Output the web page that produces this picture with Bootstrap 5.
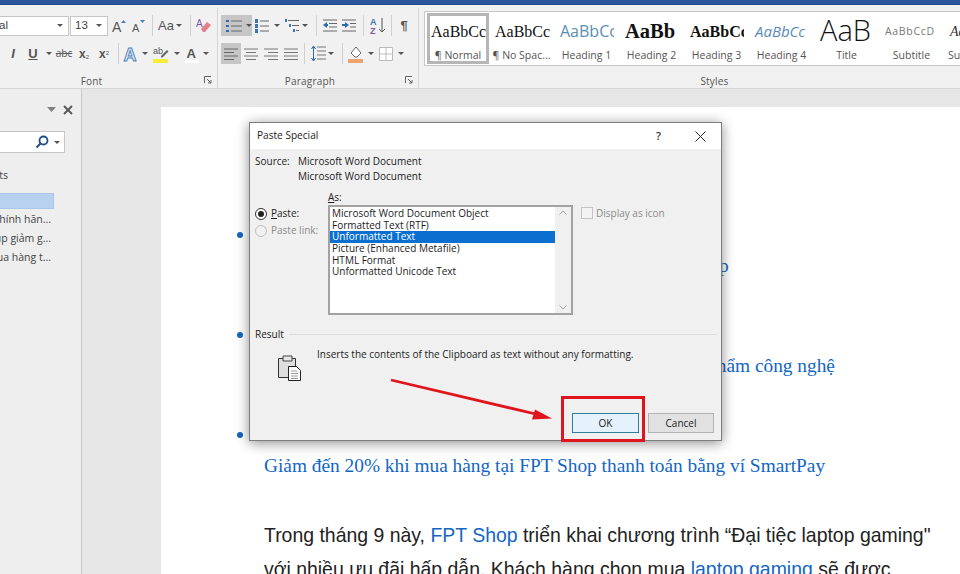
<!DOCTYPE html>
<html lang="vi">
<head>
<meta charset="utf-8">
<title>Paste Special</title>
<link rel="stylesheet" href="https://cdn.jsdelivr.net/npm/bootstrap@5.3.0/dist/css/bootstrap.min.css">
<style>
html,body{margin:0;height:574px;overflow:hidden;background:#e6e6e6}
body{font-family:"Open Sans","Noto Sans",sans-serif;font-size:10px;color:#333}
.wd-root{position:relative;width:960px;height:574px;overflow:hidden}
.wd-top{height:5px;background:#2b579a;border-bottom:1px solid #1f4a8c}
.wd-ribbon{height:84px;background:#f1f1f1;border-bottom:1px solid #d6d6d6}
.rb-font{width:218px;flex:none;border-right:1px solid #d4d4d4;margin:3px 0 0}
.rb-para{width:201px;flex:none;border-right:1px solid #d4d4d4;margin:3px 0 0}
.rb-rows{padding-top:7px;height:63px;gap:7px}
.rb-row{height:21px}
.rb-label{height:16px;padding-top:2px;font-size:10px;color:#555;letter-spacing:.2px;flex:none}
.lb-font{padding-right:34px}
.lb-para{padding-right:16px}
.lb-sty{padding-left:46px}
.rb-launch{right:5px;bottom:4px}
.w1{width:1px}.w2{width:2px}.w3{width:3px}.w4{width:4px}.w6{width:6px}.w8{width:8px}.w10{width:10px}.w12{width:12px}.w18{width:18px}.w19{width:19px}.w20{width:20px}.w22{width:22px}.w31{width:31px}
.cl{height:21px;display:flex;align-items:center;justify-content:center;flex:none;color:#555}
.cl svg{display:block;flex:none}
.sp{position:relative}
.sp::after{content:"";position:absolute;left:50%;top:0;bottom:0;width:1px;background:#d0d0d0}
.cr::after{content:"";display:block;border:3px solid transparent;border-top:3.5px solid #555;border-bottom:0}
.on{background:#c6c6c6}
.fbox{height:20px;background:#fff;border:1px solid #c6c6c6;font-size:11.5px;color:#444;font-family:"Liberation Sans",sans-serif}
.fb-name{width:69px;margin-right:1px;border-left:0}
.fb-name span{margin-left:-15px;white-space:nowrap}
.fb-size{width:38px;margin-right:2px}
.fbox .cr{margin-left:auto;margin-right:5px}
.g-a{font-family:"Liberation Sans",sans-serif;font-size:13px;color:#555;line-height:1}
.g-x{font-size:12px}
.g-x sub,.g-x sup{font-size:6px;font-weight:400}
.gal{margin:6px 0 0 5px;width:540px;height:55px;flex:none;background:#fff;border:1px solid #c8c8c8;border-right:0;padding:1px 0 0 2px;overflow:hidden}
.tile{width:65px;height:51px;flex:none;overflow:hidden;text-align:center;padding-top:3px}
.tile.act{border:3px solid #b6b6b6;width:62px;padding-top:0}
.tv{height:31px;line-height:31px;white-space:nowrap;overflow:hidden;color:#111;display:flex;justify-content:flex-start;align-items:center;padding-left:6px}
.tile.act .tv{padding-left:1px}
.tl{font-size:10.5px;line-height:14px;margin-top:1px;color:#555;white-space:nowrap}
.t-serif{font-family:"Liberation Serif",serif;font-size:16px;width:61px}
.t-h1{font-family:"Open Sans",sans-serif;font-size:16px;color:#5a8db5;width:60px}
.t-h2{font-family:"Liberation Serif",serif;font-weight:700;font-size:20.5px}
.t-h3{font-family:"Liberation Serif",serif;font-weight:700;font-size:16px;width:60px}
.t-h4{font-family:"Open Sans",sans-serif;font-style:italic;font-size:15px;color:#5a8db5}
.t-ti{font-family:"Open Sans",sans-serif;font-weight:300;font-size:29px}
.t-ti span{margin-top:-5px}
.t-su{font-family:"Open Sans",sans-serif;font-size:10.5px;color:#777;letter-spacing:.7px}
.t-em{font-family:"Liberation Serif",serif;font-style:italic;font-size:14px;color:#333}
.tv span{flex:none}
.wd-body{height:485px}
.nv{width:82px;background:#eeeeee;border-right:1px solid #c9c9c9;padding-top:12px;font-size:10.5px;color:#444;overflow:hidden}
.nv-head{height:18px;padding-right:8px;gap:7px}
.nv-search{width:65px;height:22px;margin-top:12px;background:#fff;border:1px solid #c6c6c6;border-left:0;gap:5px;padding-right:4px}
.nv-item{white-space:nowrap;height:19px;line-height:19px;width:51px;overflow:visible}
.nv-res{margin-top:15px;margin-bottom:9px;width:8px}
.nv-hi{width:54px;height:16px;background:#b9d1f1;border:1px solid #a9c5ea;border-left:0;margin-bottom:1px}
.dk{flex:1;padding:18px 0 0 79px;overflow:hidden}
.pg{height:470px;background:#fff;padding:118px 0 0 103px;overflow:hidden}
.pg-b{margin-bottom:45px}
.pg-b.lst{margin-bottom:37.5px}
.pg-dot{height:20px;position:relative}
.pg-dot::before{content:"";position:absolute;left:-27px;top:7px;width:6px;height:6px;border-radius:50%;background:#1565c0}
.pg-h{height:28px;margin-top:7px;line-height:28px;font-family:"Liberation Serif",serif;font-size:19.35px;color:#1266c4;white-space:nowrap}
.pg-p{font-family:"Liberation Sans",sans-serif;font-size:19.45px;line-height:34px;color:#222;white-space:nowrap;margin:0}
.pg-p a{color:#1266c4;text-decoration:none}
.dlg{position:absolute;left:249px;top:122px;width:473px;height:319px;background:#f0f0f0;border:1px solid #7d7d7d;box-shadow:0 2px 12px rgba(0,0,0,.45);color:#1c1c1c;font-family:"Open Sans",sans-serif;font-size:10px}
.dlg-t{height:26px;background:#fff;padding:0 15px 0 7px;font-size:10.1px}
.dlg-q{font-weight:600;font-size:11px;margin-right:34px;color:#333}
.dlg-b{padding:5px 4px 7px 5px;height:291px}
.srcl{height:15px;line-height:15px}
.srcn{width:43px}
.asl{height:15px;line-height:15px;margin:6px 0 0 73px}
.u1{text-decoration:underline}
.dlm{height:110px}
.opts{width:73px}
.opr{height:17px;gap:4px}
.rad{width:12px;height:12px;border:1px solid #333;border-radius:50%;background:#fff;display:flex;align-items:center;justify-content:center;flex:none}
.rad::before{content:"";width:6px;height:6px;border-radius:50%;background:#222}
.rad.off{border-color:#c0c0c0;background:#f0f0f0}
.rad.off::before{display:none}
.dis{color:#8a8a8a}
.lbx{width:245px;height:110px;background:#fff;border:2px solid #a2a2a2;border-radius:0;overflow:hidden;flex-direction:row}
.lbi{flex:1;padding-top:1px}
.lbi .list-group-item{background:transparent;border:0;border-radius:0;padding:0 0 0 2px;height:11.9px;line-height:11.9px;font-size:10px;color:#1c1c1c;white-space:nowrap}
.lbi .list-group-item.active{background:#0a6fcf;color:#fff}
.lbs{width:16px;background:#f0f0f0;padding:3px 0}
.chk{margin-left:8px;gap:3px;height:14px;margin-top:1px}
.chkb{width:12px;height:12px;background:#f3f3f3;border:1px solid #c4c4c4}
.rsl{height:15px;line-height:15px;margin-top:12px;gap:5px}
.rsl i{flex:1;height:1px;background:#dcdcdc}
.rsd{margin:2px 0 0 22px;gap:15px}
.rsd svg{margin-top:10px;flex:none}
.rsd p{margin:3px 0 0;line-height:14px}
.rsf{padding-right:3px}
.btn.dbtn{width:67px;height:20px;padding:0;font-size:10px;line-height:17px;border-radius:0;color:#1c1c1c;font-family:"Open Sans",sans-serif}
.btn.okb{background:#e5f1fb;border:1.5px solid #2f7f9f;margin-right:9px}
.btn.cnb{background:#e1e1e1;border:1px solid #b4b4b4;width:66px}
.rbox{position:absolute;left:561px;top:396px;width:84px;height:46px;border:3px solid #e0141c}
.arw{position:absolute;left:385px;top:372px}
</style>
</head>
<body>
<div class="wd-root">
  <div class="wd-top"></div>
  <div class="wd-ribbon d-flex">
    <div class="rb-font d-flex flex-column position-relative">
      <div class="d-flex flex-column rb-rows">
        <div class="d-flex rb-row align-items-center">
          <div class="fbox fb-name d-flex align-items-center overflow-hidden"><span>Arial</span><b class="cr"></b></div>
          <div class="fbox fb-size d-flex align-items-center ps-1"><span>13</span><b class="cr"></b></div>
          <div class="cl w18"><svg width="16" height="16" viewBox="0 0 16 16"><text x="1" y="14" font-family="Liberation Sans" font-size="14" fill="#555">A</text><path d="M10 5l2.500-3 2.500 3z" fill="#4d82b8"/></svg></div>
          <div class="cl w20"><svg width="16" height="16" viewBox="0 0 16 16"><text x="2" y="14" font-family="Liberation Sans" font-size="11" fill="#555">A</text><path d="M10 2l2.500 3 2.500-3z" fill="#4d82b8"/></svg></div>
          <div class="cl w8 sp"></div>
          <div class="cl w20 g-a">Aa</div><div class="cl w6 cr"></div>
          <div class="w4"></div><div class="cl w8 sp"></div>
          <div class="cl w20"><svg width="16" height="16" viewBox="0 0 16 16"><text x="0" y="9" font-family="Liberation Sans" font-size="10" fill="#7a5aa8">A</text><path d="M5 11l6-7 4 3-6 7H7z" fill="#e4808a"/></svg></div>
        </div>
        <div class="d-flex rb-row align-items-center">
          <div class="w3"></div>
          <div class="cl w20 g-a fst-italic fw-bold">I</div>
          <div class="cl w20 g-a fw-bold text-decoration-underline">U</div>
          <div class="cl w12 cr"></div>
          <div class="cl w18"><span class="text-decoration-line-through">abc</span></div>
          <div class="w1"></div>
          <div class="cl w20 fw-bold g-a g-x"><span>x<sub>2</sub></span></div>
          <div class="cl w20 fw-bold g-a g-x"><span>x<sup>2</sup></span></div>
          <div class="cl w8 sp"></div>
          <div class="cl w18"><svg width="18" height="18" viewBox="0 0 18 18"><text x="1.500" y="16" font-family="Liberation Sans" font-weight="700" font-size="18" fill="#dce8f5" stroke="#4d82b8" stroke-width=".9">A</text></svg></div>
          <div class="cl w10 cr"></div>
          <div class="cl w22"><svg width="18" height="18" viewBox="0 0 18 18"><text x="1" y="9" font-family="Liberation Sans" font-size="9" fill="#555">ab</text><path d="M9 11l6-6 1.500 1.500-6 6H9z" fill="#666"/><rect x="1" y="14" width="15" height="4" fill="#f5ee3a"/></svg></div>
          <div class="cl w10 cr"></div>
          <div class="cl w20"><svg width="16" height="18" viewBox="0 0 16 18"><text x="2.500" y="13" font-family="Liberation Sans" font-weight="700" font-size="13" fill="#555">A</text><rect x="1" y="15" width="14" height="3" fill="#fff"/></svg></div>
          <div class="cl w8 cr"></div>
        </div>
      </div>
      <div class="rb-label lb-font d-flex align-items-center justify-content-center mt-auto">Font</div>
      <svg class="position-absolute rb-launch" width="8" height="8" viewBox="0 0 8 8"><path d="M.5 7V.5H7M3 3l4 4M4 7h3V4" fill="none" stroke="#666"/></svg>
    </div>
    <div class="rb-para d-flex flex-column position-relative">
      <div class="d-flex flex-column rb-rows">
        <div class="d-flex rb-row align-items-center">
          <div class="w3"></div>
          <div class="cl w31 on cr justify-content-start"><svg class="ms-1" width="18" height="16" viewBox="0 0 18 16"><path d="M1 2h3v2H1zM1 7h3v2H1zM1 12h3v2H1z" fill="#2b6cb0"/><path d="M6 3h11M6 8h11M6 13h11" stroke="#666"/></svg><span class="w4"></span></div>
          <div class="cl w20"><svg width="16" height="16" viewBox="0 0 16 16"><path d="M1 1h3v4H1zM1 6h3v4H1zM1 11h3v4H1z" fill="#3a76b5"/><path d="M6 3h9M6 8h9M6 13h9" stroke="#666"/></svg></div>
          <div class="cl w10 cr"></div>
          <div class="cl w20"><svg width="16" height="16" viewBox="0 0 16 16"><path d="M1 1h2v3H1zM5 6h2v3H5zM9 11h2v3H9z" fill="#3a76b5"/><path d="M4 2.500h11M8 7.500h7M12 12.500h3" stroke="#666"/></svg></div>
          <div class="cl w6 cr"></div>
          <div class="w4"></div><div class="cl w8 sp"></div>
          <div class="cl w20"><svg width="16" height="14" viewBox="0 0 16 14"><path d="M1 1h14M7 4.500h8M7 8h8M1 12h14" stroke="#666"/><path d="M1 6l4-3v2h1v2H5v2z" fill="#2b6cb0"/></svg></div>
          <div class="cl w18"><svg width="16" height="14" viewBox="0 0 16 14"><path d="M1 1h14M9 4.500h6M9 8h6M1 12h14" stroke="#666"/><path d="M8 6L4 3v2H1v2h3v2z" fill="#2b6cb0"/></svg></div>
          <div class="w1"></div><div class="cl w8 sp"></div>
          <div class="w1"></div>
          <div class="cl w19"><svg width="16" height="17" viewBox="0 0 16 17"><text x="0" y="8" font-family="Liberation Sans" font-weight="700" font-size="9" fill="#3a76b5">A</text><text x="0" y="16.500" font-family="Liberation Sans" font-weight="700" font-size="9" fill="#7a5aa8">Z</text><path d="M12 1v14M9 12l3 3 3-3" fill="none" stroke="#555"/></svg></div>
          <div class="cl w8 sp"></div>
          <div class="cl w18 g-a fw-bold">¶</div>
        </div>
        <div class="d-flex rb-row align-items-center">
          <div class="w3"></div>
          <div class="cl w20 on"><svg width="14" height="12" viewBox="0 0 14 12"><path d="M0 1h14M0 4.500h10M0 8h14M0 11.500h10" stroke="#666"/></svg></div>
          <div class="cl w20"><svg width="14" height="12" viewBox="0 0 14 12"><path d="M0 1h14M2 4.500h10M0 8h14M2 11.500h10" stroke="#777"/></svg></div>
          <div class="cl w20"><svg width="14" height="12" viewBox="0 0 14 12"><path d="M0 1h14M4 4.500h10M0 8h14M4 11.500h10" stroke="#777"/></svg></div>
          <div class="cl w19"><svg width="14" height="12" viewBox="0 0 14 12"><path d="M0 1h14M0 4.500h14M0 8h14M0 11.500h14" stroke="#777"/></svg></div>
          <div class="cl w8 sp"></div>
          <div class="cl w20"><svg width="15" height="17" viewBox="0 0 15 17"><path d="M6 2h9M6 6h9M6 10h9M6 14h9" stroke="#777"/><path d="M2.500 2v13M.5 4l2-3 2 3M.5 13l2 3 2-3" fill="none" stroke="#2b6cb0"/></svg></div>
          <div class="cl w6 cr"></div>
          <div class="w4"></div><div class="cl w8 sp"></div>
          <div class="cl w20"><svg width="16" height="18" viewBox="0 0 16 18"><path d="M3 8l5-6 5 6-4 4H7z" fill="#fff" stroke="#666"/><rect x="0" y="14" width="15" height="4" fill="#eda36c"/></svg></div>
          <div class="cl w10 cr"></div>
          <div class="cl w20"><svg width="14" height="14" viewBox="0 0 14 14"><path d="M.5.500h13v13H.5zM7 .5v13M.5 7h13" fill="#fff" stroke="#bbb"/></svg></div>
          <div class="cl w10 cr"></div>
        </div>
      </div>
      <div class="rb-label lb-para d-flex align-items-center justify-content-center mt-auto">Paragraph</div>
      <svg class="position-absolute rb-launch" width="8" height="8" viewBox="0 0 8 8"><path d="M.5 7V.5H7M3 3l4 4M4 7h3V4" fill="none" stroke="#666"/></svg>
    </div>
    <div class="d-flex flex-column">
      <div class="gal d-flex">
        <div class="tile act"><div class="tv t-serif"><span>AaBbCc</span></div><div class="tl">¶ Normal</div></div>
        <div class="tile"><div class="tv t-serif"><span>AaBbCc</span></div><div class="tl">¶ No Spac...</div></div>
        <div class="tile"><div class="tv t-h1"><span>AaBbCc</span></div><div class="tl">Heading 1</div></div>
        <div class="tile"><div class="tv t-h2"><span>AaBb</span></div><div class="tl">Heading 2</div></div>
        <div class="tile"><div class="tv t-h3"><span>AaBbCc</span></div><div class="tl">Heading 3</div></div>
        <div class="tile"><div class="tv t-h4"><span>AaBbCc</span></div><div class="tl">Heading 4</div></div>
        <div class="tile"><div class="tv t-ti"><span>AaB</span></div><div class="tl">Title</div></div>
        <div class="tile"><div class="tv t-su"><span>AaBbCcD</span></div><div class="tl">Subtitle</div></div>
        <div class="tile"><div class="tv t-em"><span>AaBbCcD</span></div><div class="tl text-start ps-1">Subtle Emphasis</div></div>
      </div>
      <div class="rb-label lb-sty d-flex align-items-center justify-content-center mt-auto">Styles</div>
    </div>
  </div>
  <div class="wd-body d-flex">
    <div class="nv d-flex flex-column">
      <div class="nv-head d-flex align-items-center justify-content-end">
        <svg width="9" height="6" viewBox="0 0 9 6"><path d="M0 0h9L4.500 5z" fill="#808080"/></svg>
        <svg width="10" height="10" viewBox="0 0 10 10"><path d="M1 1l8 8M9 1l-8 8" stroke="#555" stroke-width="1.800"/></svg>
      </div>
      <div class="nv-search d-flex align-items-center justify-content-end">
        <svg width="14" height="14" viewBox="0 0 14 14"><circle cx="8.500" cy="5.500" r="4" fill="none" stroke="#1f4e85" stroke-width="1.800"/><path d="M5.500 8.500L1.500 12.500" stroke="#1f4e85" stroke-width="2"/></svg>
        <b class="cr"></b>
      </div>
      <div class="nv-res d-flex justify-content-end"><span class="text-nowrap">Results</span></div>
      <div class="nv-hi"></div>
      <div class="nv-item d-flex justify-content-end"><span>Laptop gaming chính hãn...</span></div>
      <div class="nv-item d-flex justify-content-end"><span>Trợ giá giúp giảm g...</span></div>
      <div class="nv-item d-flex justify-content-end"><span>Giảm đến 20% khi mua hàng t...</span></div>
    </div>
    <div class="dk">
      <div class="pg">
        <div class="pg-b"><div class="pg-dot"></div><div class="pg-h">Đại tiệc laptop gaming chính hãng, giá cực tốt tại FPT Shop</div></div>
        <div class="pg-b"><div class="pg-dot"></div><div class="pg-h">Trợ giá mua kèm, giúp giảm giá thêm khi mua nhiều sản phẩm công nghệ</div></div>
        <div class="pg-b lst"><div class="pg-dot"></div><div class="pg-h">Giảm đến 20% khi mua hàng tại FPT Shop thanh toán bằng ví SmartPay</div></div>
        <p class="pg-p">Trong tháng 9 này, <a href="#">FPT Shop</a> triển khai chương trình “Đại tiệc laptop gaming"</p>
        <p class="pg-p">với nhiều ưu đãi hấp dẫn. Khách hàng chọn mua <a href="#">laptop gaming</a> sẽ được</p>
      </div>
    </div>
  </div>

  <div class="dlg d-flex flex-column">
    <div class="dlg-t d-flex align-items-center"><span>Paste Special</span><span class="dlg-q ms-auto">?</span>
      <svg width="11" height="11" viewBox="0 0 11 11"><path d="M.5.500l10 10M10.500.500l-10 10" stroke="#222"/></svg></div>
    <div class="dlg-b d-flex flex-column">
      <div class="srcl d-flex"><span class="srcn">Source:</span><span>Microsoft Word Document</span></div>
      <div class="srcl d-flex"><span class="srcn"></span><span>Microsoft Word Document</span></div>
      <div class="asl"><span class="u1">A</span>s:</div>
      <div class="dlm d-flex">
        <div class="opts">
          <div class="opr d-flex align-items-center"><span class="rad"></span><span><span class="u1">P</span>aste:</span></div>
          <div class="opr d-flex align-items-center dis"><span class="rad off"></span><span>Paste link:</span></div>
        </div>
        <div class="list-group lbx">
          <div class="lbi">
            <div class="list-group-item">Microsoft Word Document Object</div>
            <div class="list-group-item">Formatted Text (RTF)</div>
            <div class="list-group-item active">Unformatted Text</div>
            <div class="list-group-item">Picture (Enhanced Metafile)</div>
            <div class="list-group-item">HTML Format</div>
            <div class="list-group-item">Unformatted Unicode Text</div>
          </div>
          <div class="lbs d-flex flex-column justify-content-between align-items-center">
            <svg width="8" height="5" viewBox="0 0 8 5"><path d="M.5 4.500L4 1l3.500 3.500" fill="none" stroke="#a6a6a6"/></svg>
            <svg width="8" height="5" viewBox="0 0 8 5"><path d="M.5.500L4 4 7.500.500" fill="none" stroke="#a6a6a6"/></svg>
          </div>
        </div>
        <div class="chk d-flex align-items-center dis"><span class="chkb"></span><span>Display as icon</span></div>
      </div>
      <div class="rsl d-flex align-items-center"><span>Result</span><i></i></div>
      <div class="rsd d-flex">
        <svg width="25" height="28" viewBox="0 0 25 28"><path d="M1.500 4.500h5v-2h8v2h4v19h-17z" fill="#dedede" stroke="#333"/><path d="M6 2h9v5H6z" fill="#e6e6e6" stroke="#444"/><path d="M11.500 12.500h8l4 4v10h-12z" fill="#fff" stroke="#222"/><path d="M14 17h6M14 19.500h7M14 22h7M14 24.500h7" stroke="#999"/></svg>
        <p>Inserts the contents of the Clipboard as text without any formatting.</p>
      </div>
      <div class="d-flex justify-content-end mt-auto rsf">
        <button type="button" class="btn dbtn okb">OK</button>
        <button type="button" class="btn dbtn cnb">Cancel</button>
      </div>
    </div>
  </div>
  <div class="rbox"></div>
  <svg class="arw" width="175" height="55" viewBox="0 0 175 55"><path d="M6 8L155 43" stroke="#e0141c" stroke-width="2.800"/><path d="M167 46.500L150 37.500l-3 10z" fill="#e0141c"/></svg>
</div>
<script src="https://cdn.jsdelivr.net/npm/bootstrap@5.3.0/dist/js/bootstrap.bundle.min.js"></script>
</body>
</html>
